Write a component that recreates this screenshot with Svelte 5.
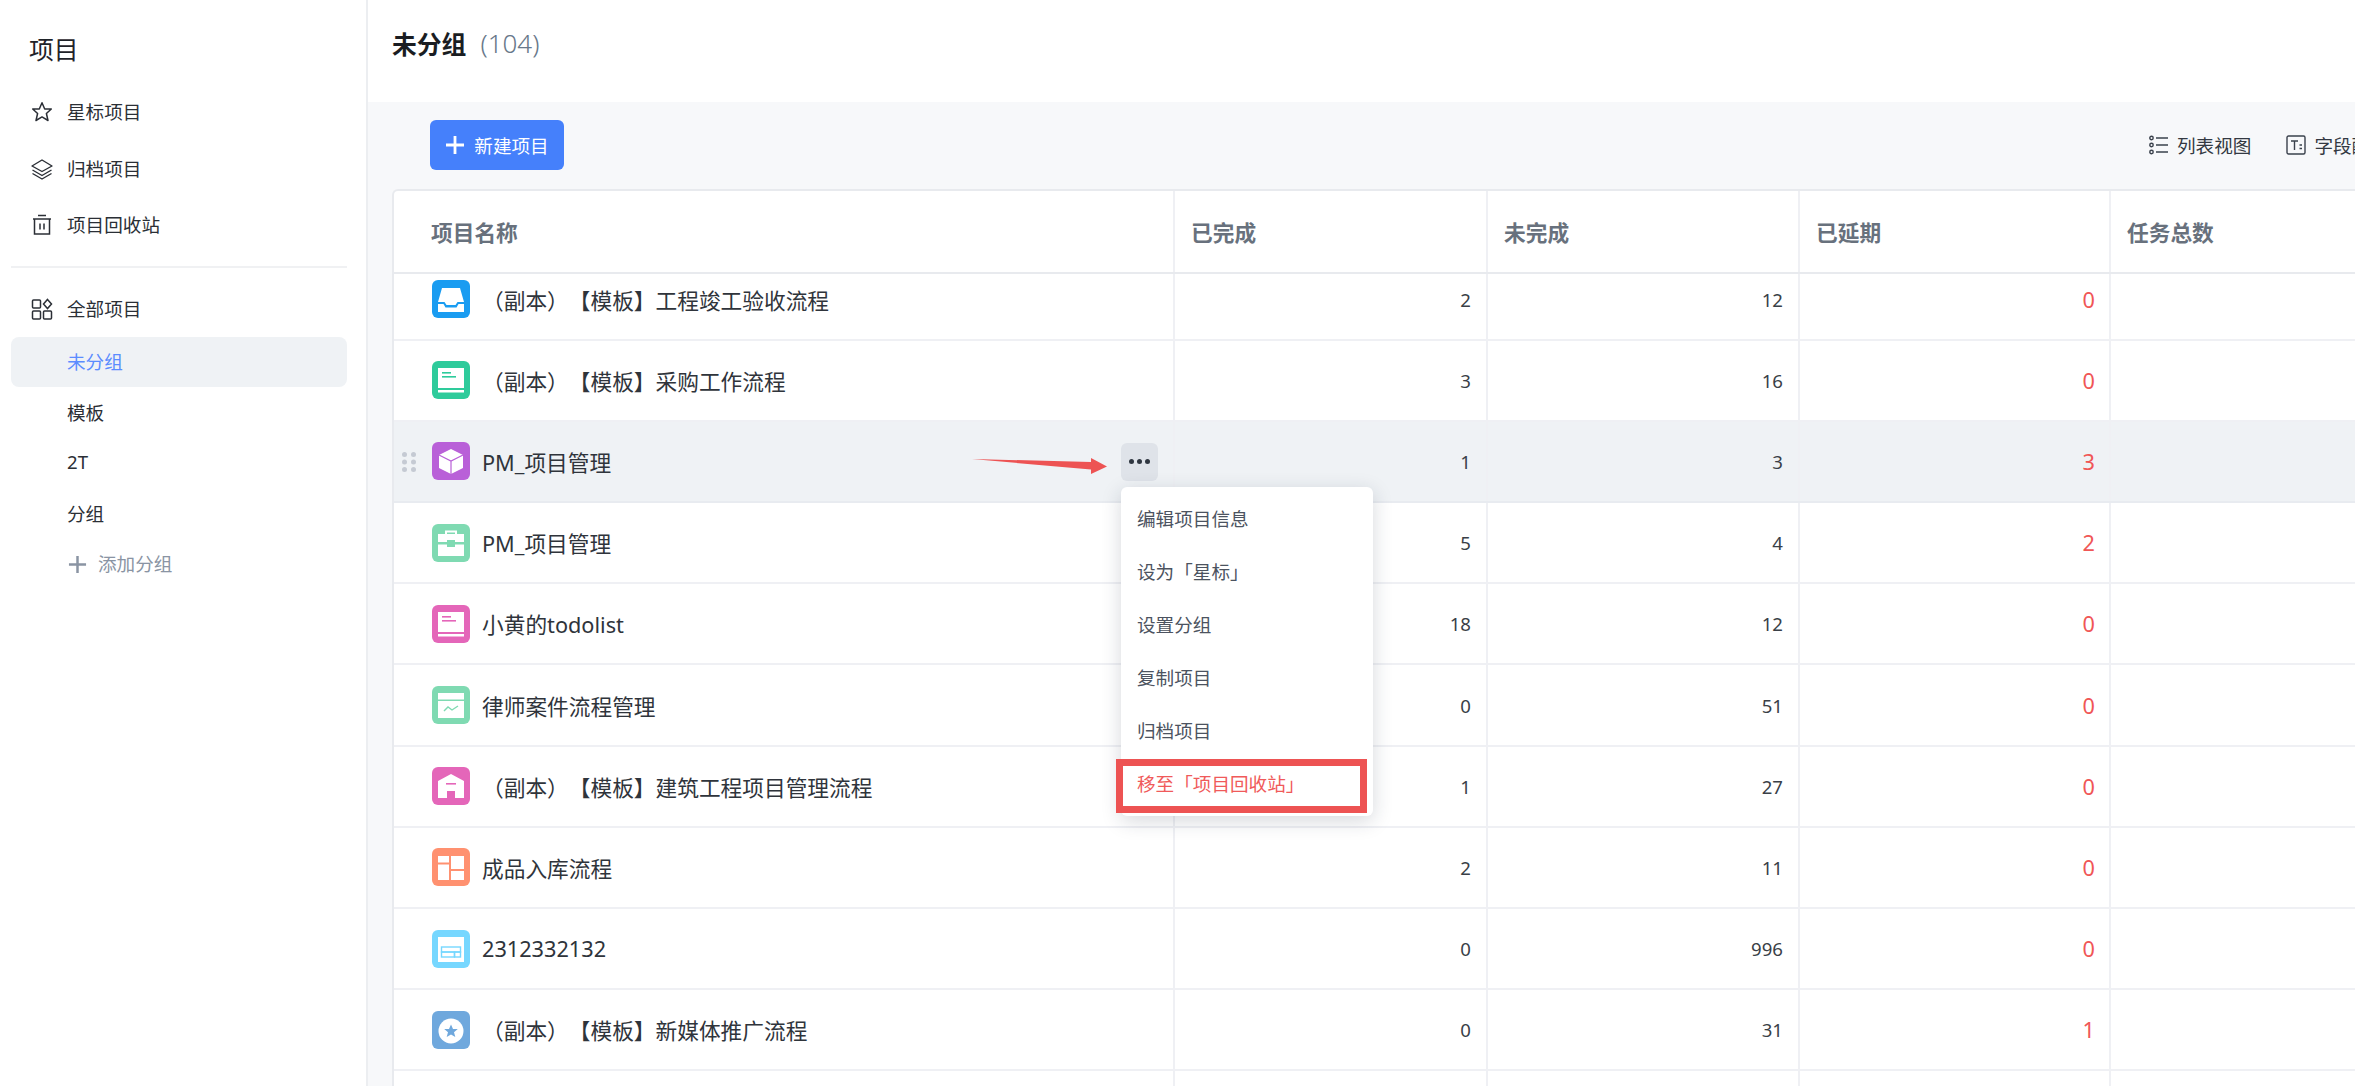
<script>
  const rows = [
    { icon: 'inbox', name: '（副本）【模板】工程竣工验收流程', a: 2, b: 12, c: 0 },
    { icon: 'book', color: '#2ecb9b', name: '（副本）【模板】采购工作流程', a: 3, b: 16, c: 0 },
    { icon: 'cube', name: 'PM_项目管理', a: 1, b: 3, c: 3, hover: true },
    { icon: 'case', name: 'PM_项目管理', a: 5, b: 4, c: 2 },
    { icon: 'book', color: '#e466b9', name: '小黄的todolist', a: 18, b: 12, c: 0 },
    { icon: 'chart', name: '律师案件流程管理', a: 0, b: 51, c: 0 },
    { icon: 'house', name: '（副本）【模板】建筑工程项目管理流程', a: 1, b: 27, c: 0 },
    { icon: 'grid', name: '成品入库流程', a: 2, b: 11, c: 0 },
    { icon: 'frame', name: '2312332132', a: 0, b: 996, c: 0 },
    { icon: 'star', name: '（副本）【模板】新媒体推广流程', a: 0, b: 31, c: 1 }
  ];
  const menu = ['编辑项目信息', '设为「星标」', '设置分组', '复制项目', '归档项目'];
</script>

{#snippet projectIcon(kind, color)}
  <svg class="picon" viewBox="0 0 38 38" width="38" height="38">
    {#if kind === 'inbox'}
      <rect width="38" height="38" rx="6" fill="#1a9cf1" />
      <path d="M10 8H28L32 22H25.5L23.5 25H14.5L12.5 22H6Z" fill="#fff" />
      <path d="M6 24H11.5L13.5 27.5H24.5L26.500 24H32V32H6Z" fill="#fff" />
    {:else if kind === 'book'}
      <rect width="38" height="38" rx="6" fill={color} />
      <rect x="6" y="7" width="26" height="20" fill="#fff" />
      <rect x="6" y="29" width="26" height="2.500" fill="#fff" />
      <rect x="10" y="11" width="9" height="1.600" fill={color} />
      <rect x="10" y="15" width="14" height="1.600" fill={color} />
    {:else if kind === 'cube'}
      <rect width="38" height="38" rx="6" fill="#b960d8" />
      <path d="M19 7L31 13V26L19 32L7 26V13Z" fill="#fff" />
      <path d="M7 13L19 19L31 13M19 19V32" fill="none" stroke="#b960d8" stroke-width="1.200" />
    {:else if kind === 'case'}
      <rect width="38" height="38" rx="6" fill="#7fdab2" />
      <path d="M14 10V7.500H24V10" fill="none" stroke="#fff" stroke-width="2" />
      <path d="M6 10H32V18H23V16H15V18H6Z" fill="#fff" />
      <path d="M6 20.500H15V23H23V20.500H32V32H6Z" fill="#fff" />
    {:else if kind === 'chart'}
      <rect width="38" height="38" rx="6" fill="#7fdab2" />
      <rect x="6" y="7" width="26" height="6.500" fill="#fff" />
      <rect x="6" y="15" width="26" height="17" fill="#fff" />
      <path d="M12 25L16 21L20 24L26 20" fill="none" stroke="#7fdab2" stroke-width="1.400" />
    {:else if kind === 'house'}
      <rect width="38" height="38" rx="6" fill="#e466b9" />
      <path d="M19 7L32 14V31H23V24H15V31H6V14Z" fill="#fff" />
      <rect x="14" y="16" width="10" height="1.600" fill="#e466b9" />
    {:else if kind === 'grid'}
      <rect width="38" height="38" rx="6" fill="#ff9170" />
      <rect x="6" y="8" width="11" height="6.500" fill="#fff" />
      <rect x="6" y="16.500" width="11" height="15.500" fill="#fff" />
      <rect x="19" y="8" width="13" height="13" fill="#fff" />
      <rect x="19" y="23" width="13" height="9" fill="#fff" />
    {:else if kind === 'frame'}
      <rect width="38" height="38" rx="6" fill="#76d7ff" />
      <rect x="6" y="7" width="26" height="25" fill="#fff" />
      <rect x="9.500" y="17" width="19" height="5" fill="none" stroke="#76d7ff" stroke-width="1.400" />
      <rect x="9.500" y="22" width="13" height="5" fill="none" stroke="#76d7ff" stroke-width="1.400" />
      <rect x="22.500" y="22" width="6" height="5" fill="none" stroke="#76d7ff" stroke-width="1.400" />
    {:else if kind === 'star'}
      <rect width="38" height="38" rx="6" fill="#6fa8dd" />
      <circle cx="19" cy="20" r="12.500" fill="#fff" />
      <path d="M19 13.500L21 18H25.800L22 21.200L23.300 26L19 23.400L14.700 26L16 21.200L12.200 18H17Z" fill="#6fa8dd" />
    {/if}
  </svg>
{/snippet}

<div class="app">
  <aside class="side">
    <div class="side-title">项目</div>
    <div class="nav">
      <svg viewBox="0 0 22 22" width="22" height="22"><path d="M11 1.800L13.700 8H20.300L15.400 12.500L17 19.500L11 15.900L5 19.500L6.600 12.500L1.700 8H8.300Z" fill="none" stroke="#2b2f36" stroke-width="1.500" stroke-linejoin="round" /></svg>
      <span>星标项目</span>
    </div>
    <div class="nav">
      <svg viewBox="0 0 22 22" width="22" height="22"><path d="M11 2L21 8L11 13.500L1 8Z M1.500 12L11 17.500L20.500 12 M1.500 15.500L11 21L20.500 15.500" fill="none" stroke="#2b2f36" stroke-width="1.400" stroke-linejoin="round" /></svg>
      <span>归档项目</span>
    </div>
    <div class="nav">
      <svg viewBox="0 0 22 22" width="22" height="22"><path d="M7 1.500H15M2 5H20M3.500 5V20H18.500V5M9 9.500V15.500M13 9.500V15.500" fill="none" stroke="#2b2f36" stroke-width="1.500" /></svg>
      <span>项目回收站</span>
    </div>
    <div class="side-rule"></div>
    <div class="nav">
      <svg viewBox="0 0 22 22" width="22" height="22"><g fill="none" stroke="#2b2f36" stroke-width="1.500"><rect x="1.500" y="2" width="8" height="8" rx="1" /><rect x="1.500" y="13" width="8" height="8" rx="1" /><rect x="12.500" y="13" width="8" height="8" rx="1" /><path d="M16.500 1.500L20.500 6L16.500 10.500L12.500 6Z" /></g></svg>
      <span>全部项目</span>
    </div>
    <div class="sub active"><span>未分组</span></div>
    <div class="sub"><span>模板</span></div>
    <div class="sub"><span>2T</span></div>
    <div class="sub"><span>分组</span></div>
    <div class="sub add">
      <svg viewBox="0 0 20 20" width="19" height="19"><path d="M10 1V19M1 10H19" stroke="#8a94a3" stroke-width="2.600" /></svg>
      <span>添加分组</span>
    </div>
  </aside>

  <main class="main">
    <header class="head">
      <h1>未分组</h1>
      <span class="count">(104)</span>
    </header>
    <section class="content">
      <div class="toolbar">
        <button class="primary">
          <svg viewBox="0 0 20 20" width="20" height="20"><path d="M10 1V19M1 10H19" stroke="#fff" stroke-width="2.800" /></svg>
          <span>新建项目</span>
        </button>
        <div class="tools">
          <div class="tool">
            <svg viewBox="0 0 20 20" width="20" height="20"><g fill="none" stroke="#3a414c" stroke-width="1.400"><circle cx="2.500" cy="3" r="1.700" /><circle cx="2.500" cy="10" r="1.700" /><circle cx="2.500" cy="17" r="1.700" /><path d="M7 3H19M7 10H19M7 17H19" /></g></svg>
            <span>列表视图</span>
          </div>
          <div class="tool">
            <svg viewBox="0 0 20 20" width="20" height="20"><g fill="none" stroke="#3a414c" stroke-width="1.400"><rect x="1" y="1" width="18" height="18" rx="1.500" /><path d="M5 6H12M8.500 6V15M13.500 10H16M13.500 13.500H16" /></g></svg>
            <span>字段配置</span>
          </div>
        </div>
      </div>

      <div class="table">
        <div class="row thead">
          <div class="cell name">项目名称</div>
          <div class="cell">已完成</div>
          <div class="cell">未完成</div>
          <div class="cell">已延期</div>
          <div class="cell">任务总数</div>
        </div>
        <div class="tbody">
          {#each rows as r}
            <div class="row trow" class:hover={r.hover}>
              <div class="cell name">
                {#if r.hover}
                  <svg class="drag" viewBox="0 0 14 20" width="14" height="20"><g fill="#c5cad3"><circle cx="2.500" cy="2.500" r="2.500" /><circle cx="11.500" cy="2.500" r="2.500" /><circle cx="2.500" cy="10" r="2.500" /><circle cx="11.500" cy="10" r="2.500" /><circle cx="2.500" cy="17.500" r="2.500" /><circle cx="11.500" cy="17.500" r="2.500" /></g></svg>
                {/if}
                {@render projectIcon(r.icon, r.color)}
                <span class="pname">{r.name}</span>
                {#if r.hover}
                  <button class="more" aria-label="更多">
                    <i></i><i></i><i></i>
                  </button>
                {/if}
              </div>
              <div class="cell num">{r.a}</div>
              <div class="cell num">{r.b}</div>
              <div class="cell num late">{r.c}</div>
              <div class="cell"></div>
            </div>
          {/each}
          <div class="row trow">
            <div class="cell name"></div><div class="cell"></div><div class="cell"></div><div class="cell"></div><div class="cell"></div>
          </div>
        </div>
      </div>
    </section>
  </main>

  <div class="menu">
    {#each menu as m}
      <div class="menu-item">{m}</div>
    {/each}
    <div class="menu-item danger">移至「项目回收站」</div>
  </div>
  <div class="redbox"></div>
  <svg class="arrow" viewBox="0 0 136 18" width="136" height="18">
    <path d="M0 1L119 4V0L135 8.500L119 16V11.500Z" fill="#ed5353" />
  </svg>
</div>

<style>
  :global(body) {
    margin: 0;
    background: #fff;
    overflow: hidden;
  }
  .app {
    position: relative;
    display: flex;
    width: 2355px;
    height: 1086px;
    overflow: hidden;
    font-family: "Noto Sans", "Noto Sans CJK SC", sans-serif;
    text-spacing-trim: space-all;
    color: #2b2f36;
  }
  .side {
    box-sizing: border-box;
    flex: 0 0 368px;
    border-right: 2px solid #eceef1;
    padding: 0 19px 0 11px;
  }
  .side-title {
    height: 72px;
    padding: 12px 0 0 18px;
    display: flex;
    align-items: center;
    font-size: 24.800px;
    color: #1f2329;
  }
  .nav {
    height: 56.500px;
    display: flex;
    align-items: center;
    gap: 15px;
    padding-left: 20px;
    font-size: 18.600px;
  }
  .nav span, .sub span {
    margin-left: -1px;
    padding-bottom: 3px;
  }
  .side-rule {
    height: 2px;
    margin: 12px 0 13px;
    background: #f0f1f3;
  }
  .sub {
    height: 50.500px;
    display: flex;
    align-items: center;
    padding-left: 57px;
    font-size: 18.600px;
    border-radius: 8px;
  }
  .sub.active {
    height: 50px;
    margin-bottom: 0.500px;
    background: #eff2f5;
    color: #5b8cff;
  }
  .sub.add {
    color: #8a94a3;
    gap: 12px;
  }
  .main {
    flex: 1;
    min-width: 0;
    display: flex;
    flex-direction: column;
  }
  .head {
    height: 102px;
    flex: none;
    display: flex;
    align-items: center;
    padding: 0 0 16px 24px;
    box-sizing: border-box;
    gap: 14px;
  }
  .head h1 {
    margin: 0;
    font-size: 24.800px;
    font-weight: 700;
    color: #1a1d22;
  }
  .count {
    font-size: 26px;
    color: #68788a;
    font-weight: 300;
  }
  .content {
    flex: 1;
    min-height: 0;
    background: #f7f8fa;
    padding-left: 24px;
    display: flex;
    flex-direction: column;
  }
  .toolbar {
    height: 87px;
    flex: none;
    display: flex;
    align-items: flex-start;
    justify-content: space-between;
    padding: 18px 0 0 38px;
    box-sizing: border-box;
  }
  .primary {
    width: 134px;
    height: 50px;
    border: 0;
    border-radius: 6px;
    background: #4580fb;
    color: #fff;
    display: flex;
    align-items: center;
    justify-content: center;
    gap: 9px;
    font: inherit;
    font-size: 18.600px;
    padding: 0;
  }
  .primary span {
    padding-bottom: 2px;
  }
  .tools {
    display: flex;
    height: 50px;
    width: 206px;
    gap: 35px;
    flex: none;
    overflow: hidden;
  }
  .tool {
    display: flex;
    align-items: center;
    gap: 8px;
    font-size: 18.600px;
    white-space: nowrap;
    color: #333942;
  }
  .tool span {
    padding-bottom: 2px;
  }
  .table {
    flex: 1;
    min-height: 0;
    background: #fff;
    border-top: 2px solid #e8eaee;
    border-left: 2px solid #e8eaee;
    border-top-left-radius: 6px;
    display: flex;
    flex-direction: column;
  }
  .row {
    display: grid;
    grid-template-columns: 781px 313px 312px 311px 312px;
    box-sizing: border-box;
  }
  .thead {
    height: 82.500px;
    flex: none;
    border-bottom: 2px solid #e8eaee;
    font-size: 21.700px;
    font-weight: 700;
    color: #68717d;
  }
  .thead .cell {
    padding-left: 16px;
  }
  .thead .cell.name {
    padding-left: 37px;
  }
  .tbody {
    flex: 1;
    min-height: 0;
    overflow: hidden;
  }
  .tbody .trow:first-child {
    margin-top: -14px;
  }
  .trow {
    height: 81.200px;
    border-bottom: 2px solid #eff0f4;
  }
  .trow.hover {
    background: #eff2f5;
    border-bottom-color: #e8ebf0;
  }
  .cell {
    display: flex;
    align-items: center;
    border-right: 2px solid #eff0f4;
    box-sizing: border-box;
    min-width: 0;
  }
  .name {
    position: relative;
    padding-left: 38px;
  }
  .picon {
    flex: none;
  }
  .pname {
    margin-left: 12px;
    font-size: 21.700px;
    color: #2f343b;
    white-space: nowrap;
  }
  .drag {
    position: absolute;
    left: 8px;
    top: 30px;
  }
  .more {
    position: absolute;
    left: 727px;
    top: 21px;
    width: 37px;
    height: 38px;
    border: 0;
    border-radius: 6px;
    background: #dfe3e9;
    display: flex;
    align-items: center;
    justify-content: center;
    gap: 3px;
    padding: 0;
  }
  .more i {
    width: 5px;
    height: 5px;
    border-radius: 50%;
    background: #2f3640;
  }
  .num {
    justify-content: flex-end;
    padding-right: 15px;
    font-size: 18.600px;
    color: #3a3f47;
  }
  .num.late {
    font-size: 21.700px;
    color: #f05656;
    padding-right: 14px;
  }
  .menu {
    position: absolute;
    left: 1121px;
    top: 487px;
    width: 252px;
    height: 329px;
    box-sizing: border-box;
    padding: 5.500px 0;
    background: #fff;
    border-radius: 6px;
    box-shadow: 0 5px 20px rgba(30, 40, 60, 0.18);
  }
  .menu-item {
    height: 53px;
    display: flex;
    align-items: center;
    padding: 0 0 3px 16px;
    box-sizing: border-box;
    font-size: 18.600px;
    color: #4c5360;
  }
  .menu-item.danger {
    color: #f05a5a;
  }
  .redbox {
    position: absolute;
    left: 1116px;
    top: 759px;
    width: 251px;
    height: 54px;
    box-sizing: border-box;
    border: 7px solid #ed5353;
  }
  .arrow {
    position: absolute;
    left: 972px;
    top: 458px;
  }
</style>
